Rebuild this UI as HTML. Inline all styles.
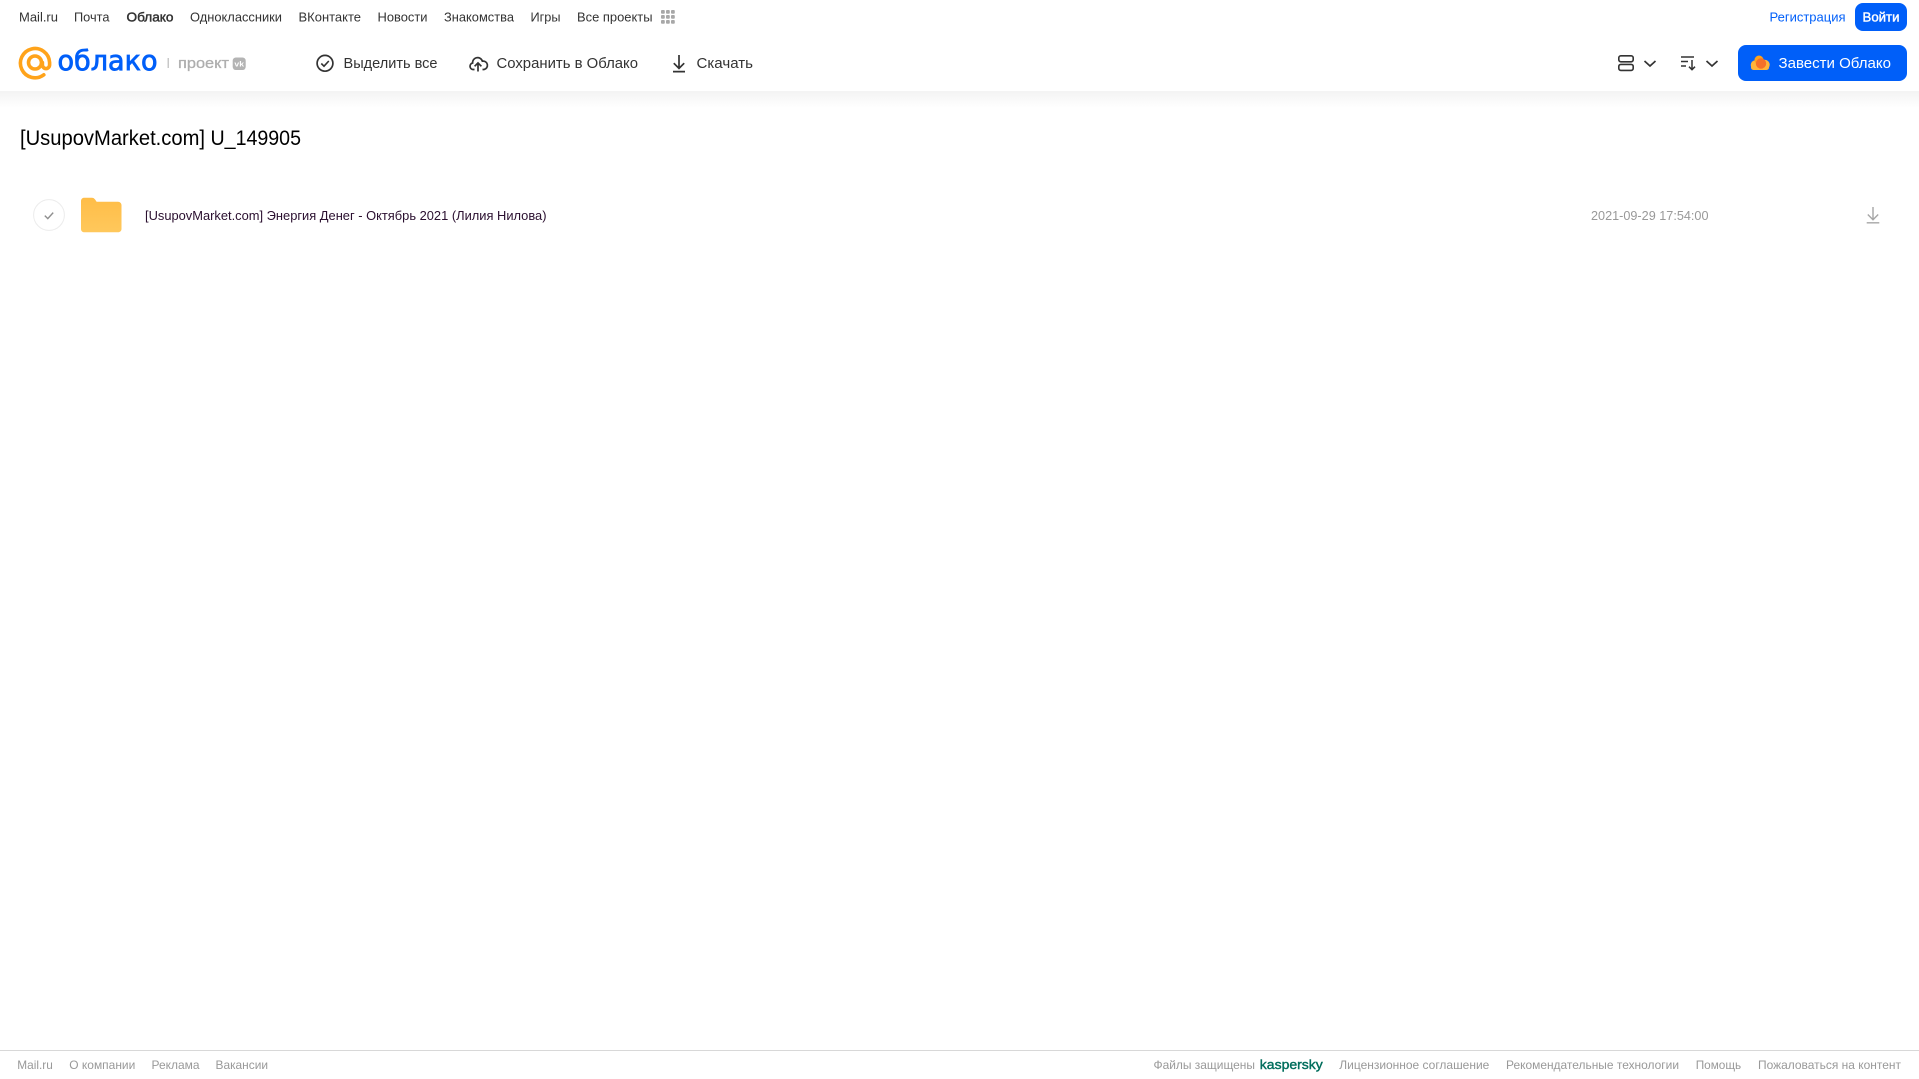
<!DOCTYPE html>
<html lang="ru">
<head>
<meta charset="utf-8">
<title>[UsupovMarket.com] U_149905</title>
<style>
html,body{margin:0;padding:0;background:#fff;overflow:hidden}
svg{display:block}
text{font-family:"Liberation Sans",Arial,sans-serif;white-space:pre}
.n{font-size:13px;fill:#333}
.t{font-size:15px;fill:#333}
.f{font-size:12px;fill:#999}
</style>
</head>
<body>
<svg width="1919" height="1079" viewBox="0 0 1919 1079" xmlns="http://www.w3.org/2000/svg">
<defs>
<linearGradient id="sh" x1="0" y1="0" x2="0" y2="1"><stop offset="0" stop-color="#f3f3f3"/><stop offset="0.4" stop-color="#f8f8f8"/><stop offset="1" stop-color="#fff"/></linearGradient>
<linearGradient id="fo" x1="0" y1="0" x2="0" y2="1"><stop offset="0" stop-color="#ffbd47"/><stop offset="1" stop-color="#ffc85c"/></linearGradient>
</defs>
<rect width="1919" height="1079" fill="#fff"/>
<rect x="0" y="91" width="1919" height="17" fill="url(#sh)"/>

<!-- top nav -->
<text class="n" x="19" y="21.5" textLength="39" lengthAdjust="spacingAndGlyphs">Mail.ru</text>
<text class="n" x="74" y="21.5" textLength="35.5" lengthAdjust="spacingAndGlyphs">Почта</text>
<text class="n" x="126.5" y="21.5" textLength="47" lengthAdjust="spacingAndGlyphs" stroke="#333" stroke-width="0.45">Облако</text>
<text class="n" x="190" y="21.5" textLength="92" lengthAdjust="spacingAndGlyphs">Одноклассники</text>
<text class="n" x="298.500" y="21.5" textLength="62.500" lengthAdjust="spacingAndGlyphs">ВКонтакте</text>
<text class="n" x="377.5" y="21.5" textLength="50" lengthAdjust="spacingAndGlyphs">Новости</text>
<text class="n" x="444" y="21.5" textLength="70" lengthAdjust="spacingAndGlyphs">Знакомства</text>
<text class="n" x="530.5" y="21.5" textLength="30" lengthAdjust="spacingAndGlyphs">Игры</text>
<text class="n" x="577" y="21.5" textLength="75.500" lengthAdjust="spacingAndGlyphs">Все проекты</text>
<g fill="#a8a8a8">
<rect x="661" y="10" width="3.8" height="3.8" rx="1"/><rect x="666" y="10" width="3.8" height="3.8" rx="1"/><rect x="671" y="10" width="3.8" height="3.8" rx="1"/>
<rect x="661" y="15" width="3.8" height="3.8" rx="1"/><rect x="666" y="15" width="3.8" height="3.8" rx="1"/><rect x="671" y="15" width="3.8" height="3.8" rx="1"/>
<rect x="661" y="20" width="3.8" height="3.8" rx="1"/><rect x="666" y="20" width="3.8" height="3.8" rx="1"/><rect x="671" y="20" width="3.8" height="3.8" rx="1"/>
</g>

<text x="1769.5" y="21.5" font-size="13" fill="#005ff9" textLength="76" lengthAdjust="spacingAndGlyphs">Регистрация</text>
<rect x="1855" y="3" width="52" height="28" rx="8" fill="#005ff9"/>
<text x="1862.5" y="21.5" font-size="13" fill="#fff" stroke="#fff" stroke-width="0.4" textLength="37" lengthAdjust="spacingAndGlyphs">Войти</text>

<!-- logo -->
<g fill="none" stroke="#ffa31a" stroke-width="3.6" stroke-linecap="round">
<circle cx="35" cy="62.500" r="6.500"/>
<path d="M43.800 74.800A14.600 14.600 0 1 1 49.600 62.500v2.200c0 2.200-1.700 3.900-3.600 3.900s-3.600-1.700-3.600-3.900v-2.200"/>
</g>
<text x="57.500" y="70" font-size="27.500" fill="#005ff9" stroke="#005ff9" stroke-width="0.8" textLength="100" lengthAdjust="spacingAndGlyphs" style="font-family:'DejaVu Sans',sans-serif">облако</text>
<rect x="167.600" y="58" width="1.200" height="10" fill="#bbb"/>
<text x="178" y="68" font-size="15" fill="#aeaeae" stroke="#aeaeae" stroke-width="0.3" textLength="51" lengthAdjust="spacingAndGlyphs">проект</text>
<rect x="232.700" y="57.500" width="13" height="12.500" rx="3.200" fill="#b4b4b4"/>
<text x="234.400" y="66.500" font-size="7.500" font-weight="700" fill="#fff" textLength="9.600" lengthAdjust="spacingAndGlyphs">vk</text>

<!-- toolbar -->
<circle cx="325" cy="63.300" r="7.900" fill="none" stroke="#333" stroke-width="1.700"/>
<path d="M321.300 63.500l2.700 2.700 4.800-5.200" fill="none" stroke="#333" stroke-width="1.600"/>
<text class="t" x="343.500" y="68" textLength="94" lengthAdjust="spacingAndGlyphs">Выделить все</text>

<path d="M474.500 69.500h-1.500a3.300 3.300 0 0 1-.4-6.500 5 5 0 0 1 3.600-5.200 5 5 0 0 1 6.200 3.400 3.900 3.900 0 0 1 1.600 8.300h-1.500" fill="none" stroke="#333" stroke-width="1.700"/>
<path d="M478 71.500v-8.500M474.600 66.300l3.400-3.400 3.400 3.400" fill="none" stroke="#333" stroke-width="1.700"/>
<text class="t" x="496.500" y="68" textLength="141.500" lengthAdjust="spacingAndGlyphs">Сохранить в Облако</text>

<path d="M679 55v13M673.800 63.200l5.200 5.200 5.200-5.200M673 71.600h12" fill="none" stroke="#333" stroke-width="1.700"/>
<text class="t" x="696.500" y="68" textLength="56.500" lengthAdjust="spacingAndGlyphs">Скачать</text>

<!-- view controls -->
<rect x="1618.800" y="55.800" width="14.400" height="6" rx="2" fill="none" stroke="#333" stroke-width="1.600"/>
<rect x="1618.800" y="64.400" width="14.400" height="6" rx="2" fill="none" stroke="#333" stroke-width="1.600"/>
<path d="M1644.500 61l5.500 5 5.500-5" fill="none" stroke="#333" stroke-width="1.700"/>
<path d="M1681 57h13M1681 61.500h7M1681 66h5" fill="none" stroke="#333" stroke-width="1.400"/>
<path d="M1692 60v9.500M1689 66.700l3 3 3-3" fill="none" stroke="#333" stroke-width="1.500"/>
<path d="M1706.500 61l5.500 5 5.500-5" fill="none" stroke="#333" stroke-width="1.700"/>

<rect x="1738" y="45" width="169" height="36" rx="8" fill="#005ff9"/>
<rect x="1751" y="65" width="18" height="5" rx="2.500" fill="#ffb43a"/>
<circle cx="1755.500" cy="65" r="4.800" fill="#ffb43a"/>
<circle cx="1759" cy="60" r="4.500" fill="#ffa31a"/>
<circle cx="1764.700" cy="64.800" r="5" fill="#ffb43a"/>
<circle cx="1761" cy="63.500" r="5.200" fill="#f4702a"/>
<text x="1778.500" y="68" font-size="15" fill="#fff" textLength="112.500" lengthAdjust="spacingAndGlyphs">Завести Облако</text>

<!-- title -->
<text x="20" y="145" font-size="21" fill="#000" textLength="185" lengthAdjust="spacingAndGlyphs">[UsupovMarket.com]</text>
<text x="210.500" y="145" font-size="21" fill="#000" textLength="90.500" lengthAdjust="spacingAndGlyphs">U_149905</text>

<!-- row -->
<circle cx="49" cy="215" r="15.400" fill="#fff" stroke="#ececec" stroke-width="1"/>
<path d="M44.800 215.600l3 3 5.400-6" fill="none" stroke="#8f8f8f" stroke-width="1.400"/>
<path d="M81 201c0-2 1.400-3.300 3.300-3.300h7.500c1.500 0 2.300.6 3.200 1.700l1.600 2.300h21.400c1.900 0 3.500 1.500 3.500 3.500V229c0 1.900-1.600 3.300-3.500 3.300H84.300c-1.900 0-3.300-1.400-3.300-3.300z" fill="url(#fo)"/>
<text x="145" y="220" font-size="13" fill="#2a0f2f" textLength="401.500" lengthAdjust="spacingAndGlyphs">[UsupovMarket.com] Энергия Денег - Октябрь 2021 (Лилия Нилова)</text>
<text x="1591" y="220" font-size="13" fill="#999" textLength="117.500" lengthAdjust="spacingAndGlyphs">2021-09-29 17:54:00</text>
<path d="M1873 207v12.500M1867.800 214.500l5.200 5.200 5.200-5.200M1866.700 222.800h12.600" fill="none" stroke="#a6a6a6" stroke-width="1.400"/>

<!-- footer -->
<rect x="0" y="1050" width="1919" height="1" fill="#d8d8d8"/>
<text class="f" x="17.300" y="1069" textLength="35.500" lengthAdjust="spacingAndGlyphs">Mail.ru</text>
<text class="f" x="69.300" y="1069" textLength="66" lengthAdjust="spacingAndGlyphs">О компании</text>
<text class="f" x="151.500" y="1069" textLength="48" lengthAdjust="spacingAndGlyphs">Реклама</text>
<text class="f" x="215.500" y="1069" textLength="52.500" lengthAdjust="spacingAndGlyphs">Вакансии</text>
<text class="f" x="1153.500" y="1069" textLength="101.500" lengthAdjust="spacingAndGlyphs">Файлы защищены</text>
<text x="1259.800" y="1069" font-size="13" fill="#006d5c" stroke="#006d5c" stroke-width="0.4" textLength="63" lengthAdjust="spacingAndGlyphs">kaspersky</text>
<text class="f" x="1339.300" y="1069" textLength="150" lengthAdjust="spacingAndGlyphs">Лицензионное соглашение</text>
<text class="f" x="1506" y="1069" textLength="173" lengthAdjust="spacingAndGlyphs">Рекомендательные технологии</text>
<text class="f" x="1695.700" y="1069" textLength="45.500" lengthAdjust="spacingAndGlyphs">Помощь</text>
<text class="f" x="1758" y="1069" textLength="143" lengthAdjust="spacingAndGlyphs">Пожаловаться на контент</text>
</svg>
</body>
</html>
